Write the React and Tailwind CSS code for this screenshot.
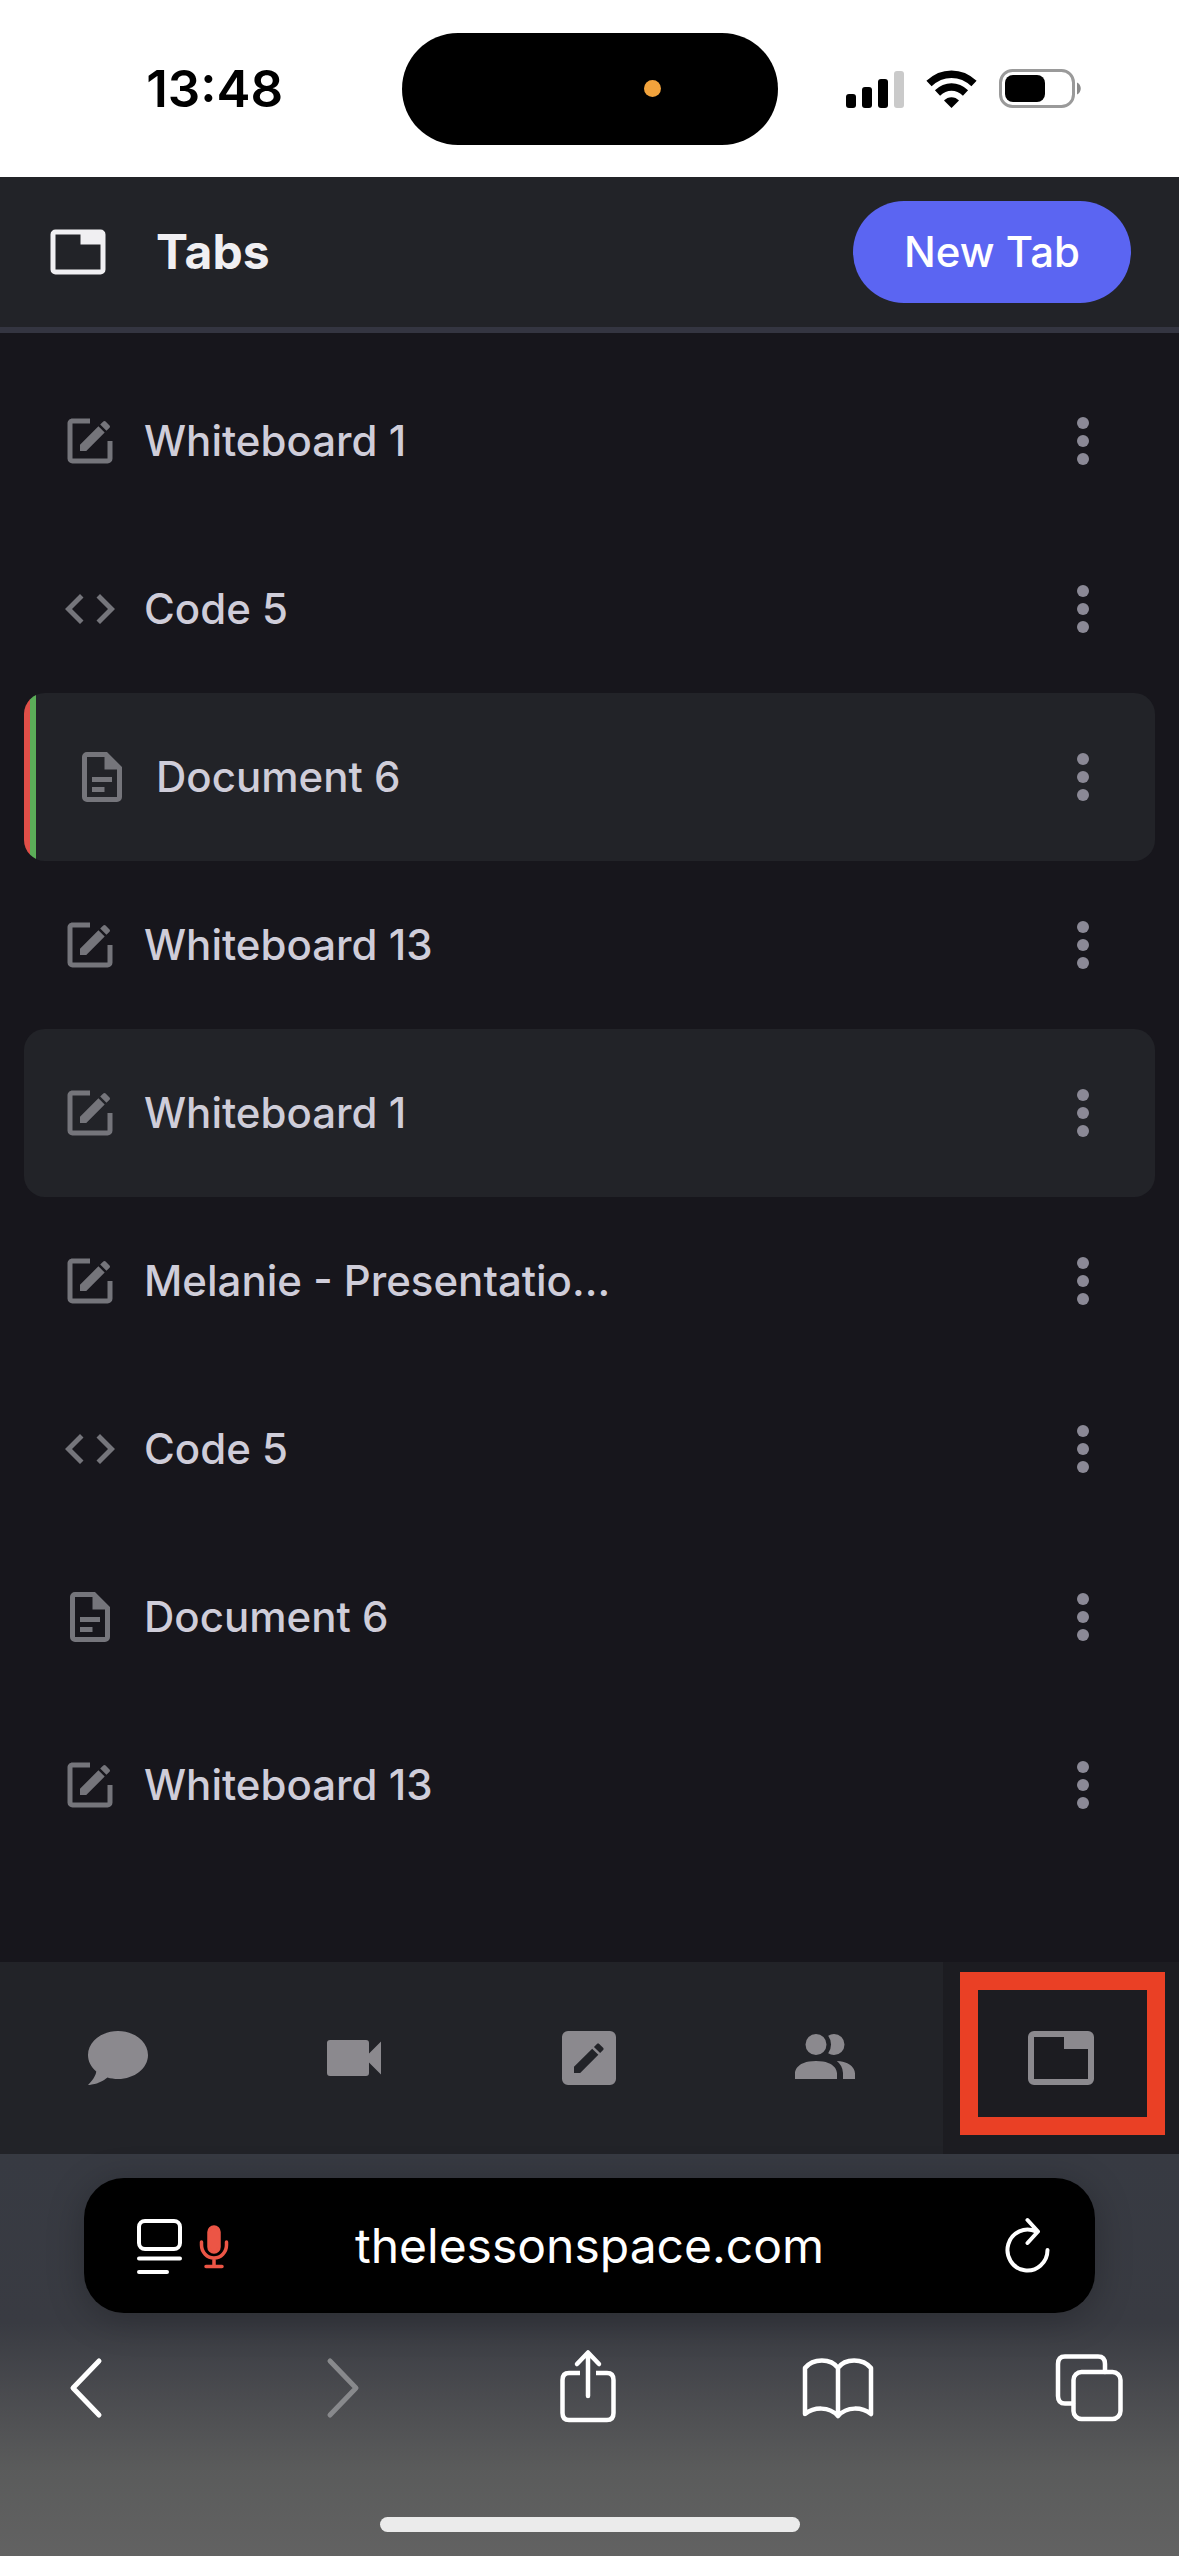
import React from "react";

const PATHS = {
  whiteboard:
    "M5,3C3.89,3 3,3.89 3,5V19A2,2 0 0,0 5,21H19A2,2 0 0,0 21,19V12H19V19H5V5H12V3H5M17.78,4C17.61,4 17.43,4.07 17.3,4.2L16.08,5.41L18.58,7.91L19.8,6.7C20.06,6.44 20.06,6 19.8,5.75L18.25,4.2C18.12,4.07 17.95,4 17.78,4M15.37,6.12L8,13.5V16H10.5L17.87,8.62L15.37,6.12Z",
  code: "M9.4 16.6L4.8 12l4.6-4.6L8 6l-6 6 6 6 1.4-1.4zm5.2 0l4.6-4.6-4.6-4.6L16 6l6 6-6 6-1.4-1.4z",
  document:
    "M6,2A2,2 0 0,0 4,4V20A2,2 0 0,0 6,22H18A2,2 0 0,0 20,20V8L14,2H6M6,4H13V9H18V20H6V4M8,12V14H16V12H8M8,16V18H13V16H8Z",
  tab: "M21,3H3A2,2 0 0,0 1,5V19A2,2 0 0,0 3,21H21A2,2 0 0,0 23,19V5A2,2 0 0,0 21,3M21,19H3V5H13V9H21V19Z",
  chat: "M12,3C17.5,3 22,6.58 22,11C22,15.42 17.5,19 12,19C10.76,19 9.57,18.82 8.47,18.5C5.55,21 2,21 2,21C4.33,18.67 4.7,17.1 4.75,16.5C3.05,15.07 2,13.13 2,11C2,6.58 6.5,3 12,3Z",
  video:
    "M17,10.5V7A1,1 0 0,0 16,6H4A1,1 0 0,0 3,7V17A1,1 0 0,0 4,18H16A1,1 0 0,0 17,17V13.5L21,17.5V6.5L17,10.5Z",
  pencilBox:
    "M19,3A2,2 0 0,1 21,5V19A2,2 0 0,1 19,21H5A2,2 0 0,1 3,19V5A2,2 0 0,1 5,3H19M16.7,9.35C16.92,9.14 16.92,8.79 16.7,8.58L15.42,7.3C15.21,7.08 14.86,7.08 14.65,7.3L13.65,8.3L15.7,10.35L16.7,9.35M7,14.94V17H9.06L15.12,10.94L13.06,8.88L7,14.94Z",
  people:
    "M16 17V19H2V17S2 13 9 13 16 17 16 17M12.5 7.5A3.5 3.5 0 1 0 9 11A3.5 3.5 0 0 0 12.5 7.5M15.94 13A5.32 5.32 0 0 1 18 17V19H22V17S22 13.37 15.94 13M15 4A3.39 3.39 0 0 0 13.07 4.59A5 5 0 0 1 13.07 10.41A3.39 3.39 0 0 0 15 11A3.5 3.5 0 0 0 15 4Z",
};

function Icon({ name, className }) {
  return (
    <svg viewBox="0 0 24 24" fill="currentColor" aria-hidden="true" className={className}>
      <path d={PATHS[name]} />
    </svg>
  );
}

function StatusBar() {
  return (
    <div className="grid h-[177px] grid-cols-[1fr_auto_1fr] items-center bg-white text-black">
      <div className="pr-6 pl-13 text-center text-[51px] leading-[60px] font-semibold">13:48</div>
      <div className="flex h-28 w-[376px] items-center justify-end rounded-full bg-black pr-[117px]">
        <span className="size-[17px] rounded-full bg-[#f2a33c]" />
      </div>
      <svg viewBox="0 0 236 40" className="ml-[68px] h-10 w-[236px]" aria-label="Signal, Wi-Fi and battery">
        <rect x="0" y="25" width="10" height="14" rx="3" />
        <rect x="16" y="18" width="10" height="21" rx="3" />
        <rect x="32" y="10" width="10" height="29" rx="3" />
        <rect x="48" y="2" width="10" height="37" rx="3" fill="#cacaca" />
        <g fill="none" stroke="#000" strokeWidth="7.5">
          <path d="M83 14.5C96 2 115 2 128 14.5" />
          <path d="M91.5 24C100 16 111 16 119.5 24" />
        </g>
        <path d="M98 31.5C102 27 109 27 113 31.5L105.500 39Z" />
        <rect x="154.5" y="1.5" width="73" height="36" rx="12" fill="none" stroke="#9a9a9a" strokeWidth="3" />
        <rect x="159" y="6" width="40" height="27" rx="8" />
        <path d="M231 13.5C236 15.5 236 23.5 231 25.5Z" fill="#8a8a8a" />
      </svg>
    </div>
  );
}

const TABS = [
  { icon: "whiteboard", label: "Whiteboard 1" },
  { icon: "code", label: "Code 5" },
  { icon: "document", label: "Document 6", highlighted: true, viewers: ["bg-[#e04f48]", "bg-[#5bad58]"] },
  { icon: "whiteboard", label: "Whiteboard 13" },
  { icon: "whiteboard", label: "Whiteboard 1", highlighted: true },
  { icon: "whiteboard", label: "Melanie - Presentatio..." },
  { icon: "code", label: "Code 5" },
  { icon: "document", label: "Document 6" },
  { icon: "whiteboard", label: "Whiteboard 13" },
];

function TabRow({ icon, label, highlighted, viewers = [] }) {
  return (
    <li
      className={
        highlighted
          ? "flex h-[168px] items-center overflow-hidden rounded-[21px] bg-[#222328] pr-[42px]"
          : "flex h-[168px] items-center pr-[42px]"
      }
    >
      {viewers.map((color) => (
        <span key={color} className={`w-1.5 self-stretch ${color}`} />
      ))}
      <button type="button" className="flex flex-1 items-center gap-6 self-stretch pl-9 text-left">
        <Icon name={icon} className="size-[60px] text-[#75757b]" />
        <span className="text-[42px] leading-[60px] font-medium text-[#cfcdd9]">{label}</span>
      </button>
      <button
        type="button"
        aria-label={`${label} options`}
        className="flex w-[60px] flex-col items-center gap-1.5 py-6"
      >
        <span className="size-3 rounded-full bg-[#8b8996]" />
        <span className="size-3 rounded-full bg-[#8b8996]" />
        <span className="size-3 rounded-full bg-[#8b8996]" />
      </button>
    </li>
  );
}

const NAV = [
  { icon: "chat", label: "Chat" },
  { icon: "video", label: "Video" },
  { icon: "pencilBox", label: "Board" },
  { icon: "people", label: "People" },
  { icon: "tab", label: "Tabs", active: true },
];

function BottomNav() {
  return (
    <nav className="grid h-48 grid-cols-5 bg-[#222328] text-[#8b898e]">
      {NAV.map(({ icon, label, active }) => (
        <button
          key={label}
          type="button"
          aria-label={label}
          className={
            active
              ? "relative flex items-center justify-center bg-[#1c1c21]"
              : "flex items-center justify-center"
          }
        >
          <Icon name={icon} className="size-[72px]" />
          {active && (
            <span className="absolute top-2.5 right-3.5 bottom-[19px] left-[17px] border-[18px] border-[#ea4025]" />
          )}
        </button>
      ))}
    </nav>
  );
}

function Stroke({ children, className, viewBox = "0 0 72 78", strokeWidth = 4.5 }) {
  return (
    <svg
      viewBox={viewBox}
      fill="none"
      stroke="currentColor"
      strokeWidth={strokeWidth}
      strokeLinecap="round"
      strokeLinejoin="round"
      aria-hidden="true"
      className={className}
    >
      {children}
    </svg>
  );
}

function BrowserBar() {
  return (
    <footer className="flex h-[402px] flex-col bg-[linear-gradient(#373a42,#393b42_42%,#4a4b4f_60%,#5a5b5b_78%,#626262)] pt-6 text-white">
      <div className="mx-[84px] flex h-[135px] items-center justify-between rounded-[40px] bg-black px-[42px] shadow-[0_6px_36px_rgba(0,0,0,0.25)]">
        <button type="button" aria-label="Page menu" className="flex w-[114px] justify-end">
          <Stroke viewBox="0 0 108 60" strokeWidth={4} className="h-[60px] w-[108px]">
            <rect x="7" y="5" width="41" height="28" rx="6" />
            <path d="M7 42.5H48M7 56H35" />
            <g stroke="#ec5545" strokeWidth="3.5">
              <rect x="77" y="11" width="10" height="25" rx="5" fill="#ec5545" />
              <path d="M69.500 26V29A12.500 13 0 0 0 94.500 29V26M82 42V50M74 50.500H90" />
            </g>
          </Stroke>
        </button>
        <input
          type="text"
          aria-label="Address"
          defaultValue="thelessonspace.com"
          className="min-w-0 flex-1 bg-transparent text-center text-5xl outline-none"
        />
        <button type="button" aria-label="Reload" className="flex w-[114px] justify-end">
          <Stroke viewBox="0 0 48 60" strokeWidth={4} className="h-[60px] w-12">
            <path d="M31 15.5A20 20.5 0 1 0 42.5 34M22.5 4L33 15.500L22.500 27" />
          </Stroke>
        </button>
      </div>
      <div className="mt-[34px] flex items-center justify-between pr-[54px] pl-[50px]">
        <button type="button" aria-label="Back">
          <Stroke className="h-[78px] w-[72px]" strokeWidth={5}>
            <path d="M49 14L23 41L49 68" />
          </Stroke>
        </button>
        <button type="button" aria-label="Forward" className="text-[#88898c]">
          <Stroke className="h-[78px] w-[72px]" strokeWidth={5}>
            <path d="M29 14L55 41L29 68" />
          </Stroke>
        </button>
        <button type="button" aria-label="Share">
          <Stroke className="h-[78px] w-[72px]">
            <path d="M36 49V6M25 17L36 5.5L47 17" />
            <path strokeLinecap="butt" d="M28 26H17Q10.5 26 10.5 33V66Q10.5 73 17 73H55Q61.5 73 61.5 66V33Q61.5 26 55 26H44" />
          </Stroke>
        </button>
        <button type="button" aria-label="Bookmarks">
          <Stroke className="h-[78px] w-[72px]">
            <path d="M36 21C29 11 11 11 3 21V67C12 60 27 59 36 69C45 59 60 60 69 67V21C61 11 43 11 36 21V69" />
          </Stroke>
        </button>
        <button type="button" aria-label="Show tabs">
          <Stroke className="h-[78px] w-[72px]">
            <rect x="20.5" y="25" width="47" height="47" rx="8" />
            <path d="M52 25V17Q52 9.500 45 9.500H12Q5 9.500 5 17V49Q5 56.500 12 56.500H20" />
          </Stroke>
        </button>
      </div>
      <div className="mx-auto mt-auto mb-6 h-[15px] w-[420px] rounded-full bg-[#ebebeb]" />
    </footer>
  );
}

export default function App() {
  return (
    <div className="flex min-h-screen flex-col bg-[#17161c] font-[Inter,sans-serif]">
      <StatusBar />
      <header className="flex h-39 items-center border-b-6 border-[#343541] bg-[#222328] px-12">
        <Icon name="tab" className="size-[60px] text-[#f0eff2]" />
        <h1 className="ml-12 flex-1 text-5xl font-bold text-[#f0eff2]">Tabs</h1>
        <button
          type="button"
          className="h-[102px] rounded-full bg-[#5b65f2] px-[51px] text-[42px] leading-[60px] font-medium text-white"
        >
          New Tab
        </button>
      </header>
      <main className="flex-1 p-6">
        <ul>
          {TABS.map((tab, index) => (
            <TabRow key={index} {...tab} />
          ))}
        </ul>
      </main>
      <BottomNav />
      <BrowserBar />
    </div>
  );
}
